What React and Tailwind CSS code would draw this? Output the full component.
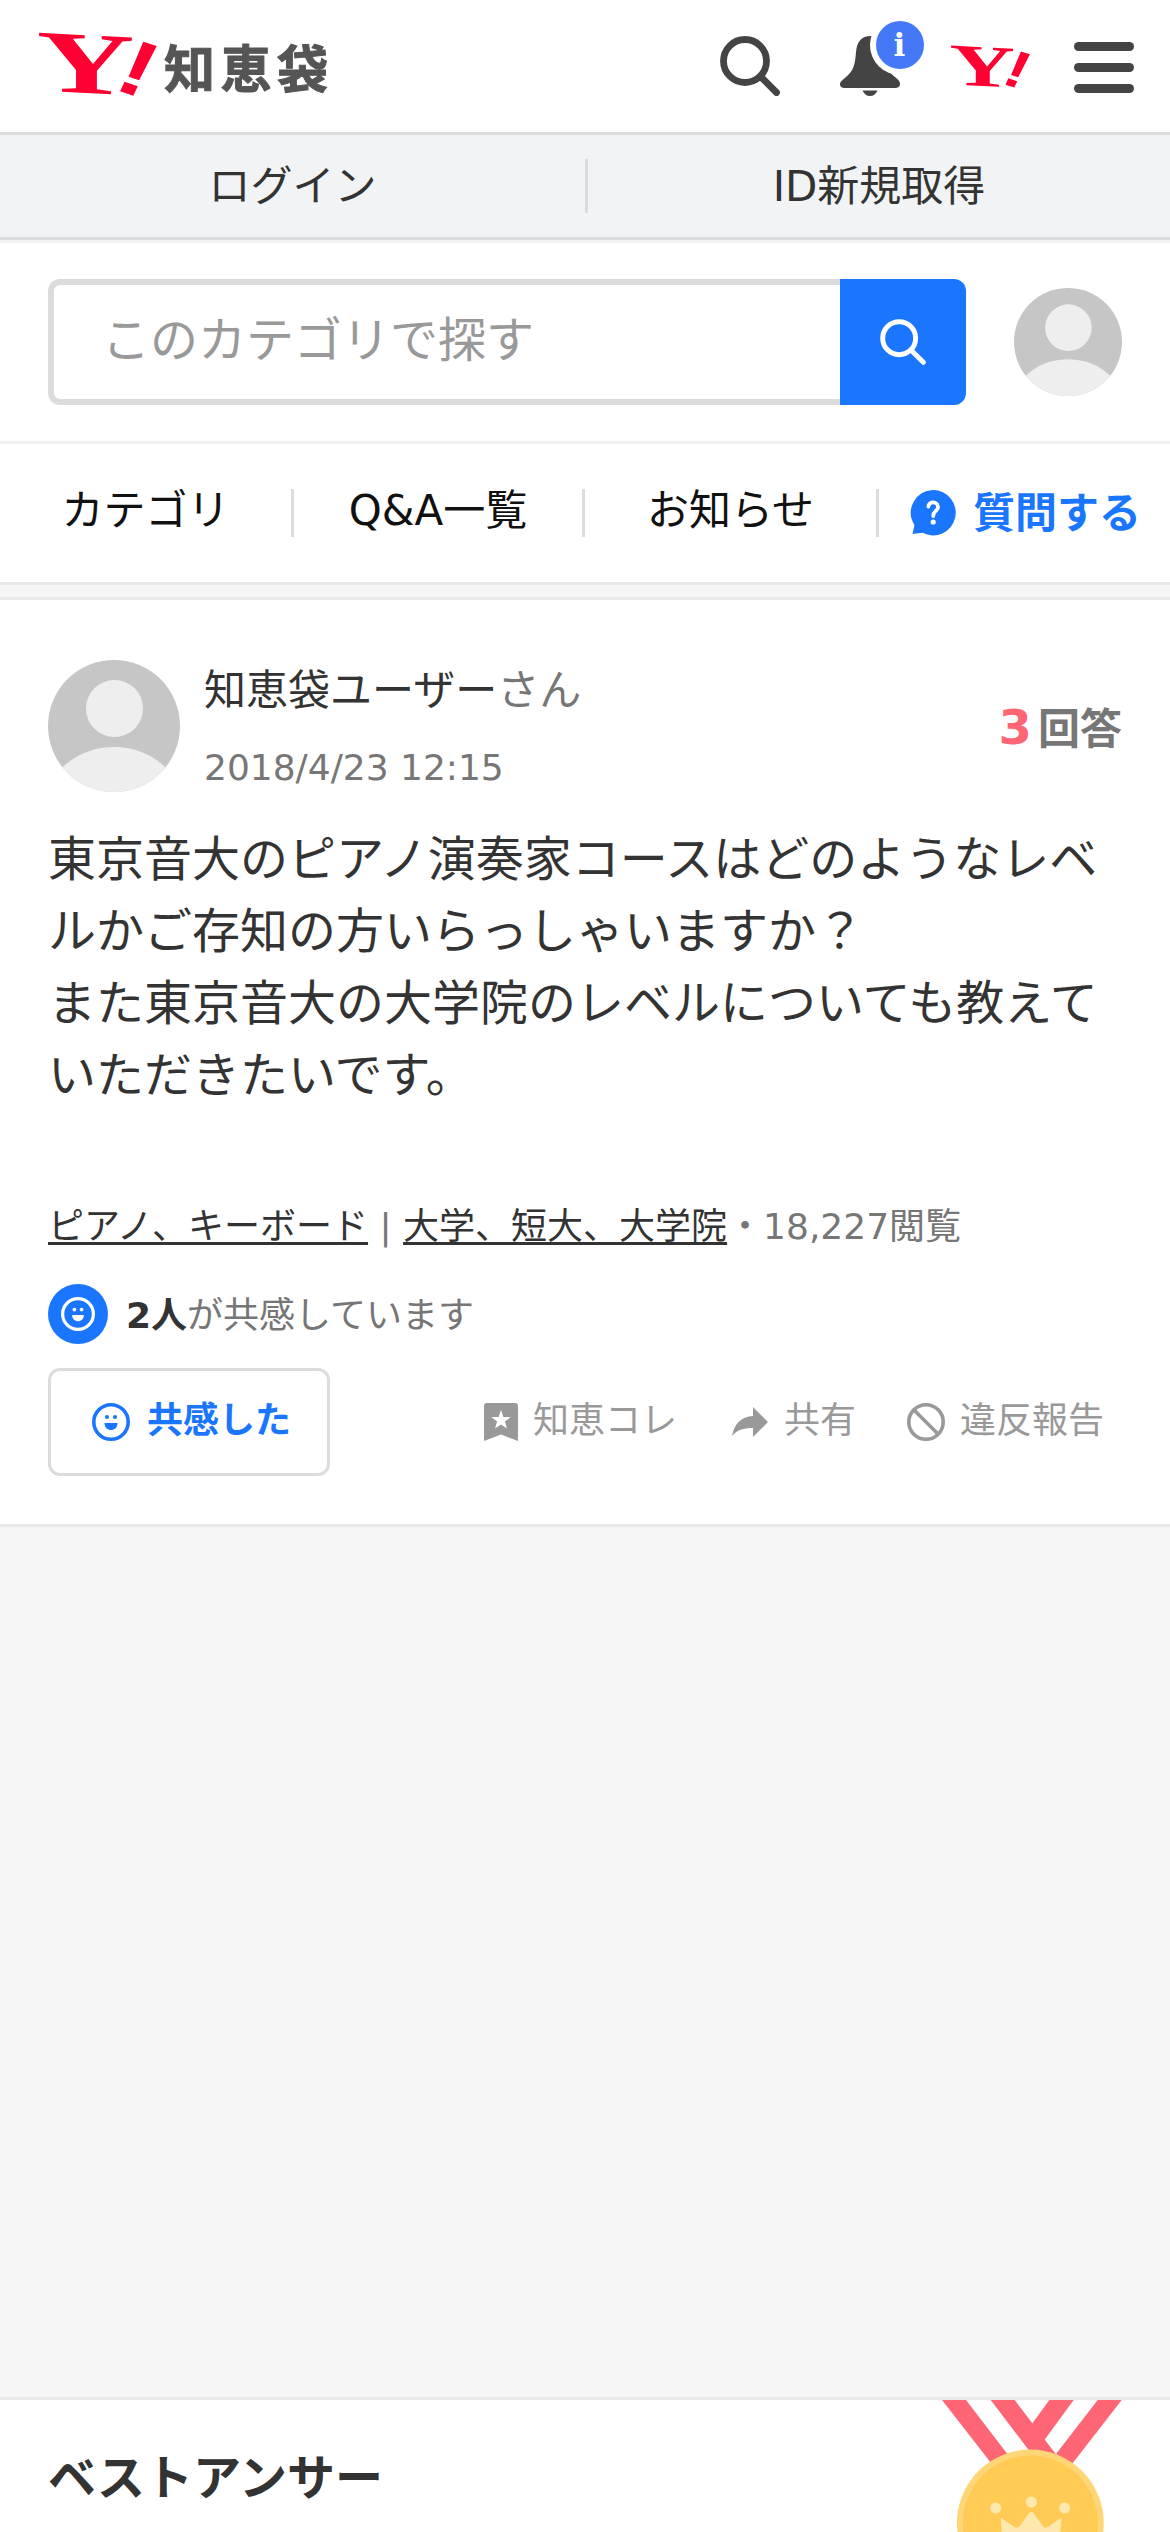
import React from "react";

function YMark({ className }) {
  return (
    <svg className={className} viewBox="0 0 118 64" aria-label="Y!">
      <g fill="#ff0033" fontWeight="700">
        <text
          transform="translate(46.500 61) skewY(3) scale(1.47 0.96)"
          fontSize="92"
          textAnchor="middle"
          fontFamily="'Liberation Serif', serif"
        >
          Y
        </text>
        <text
          transform="translate(88 61.500) rotate(18) skewX(-7) scale(1.25 1)"
          fontSize="79"
          textAnchor="middle"
          fontFamily="'Liberation Sans', sans-serif"
        >
          !
        </text>
      </g>
    </svg>
  );
}

function SearchIcon({ className, strokeWidth }) {
  return (
    <svg className={className} viewBox="0 0 60 60" fill="none" stroke="currentColor" strokeWidth={strokeWidth} strokeLinecap="round">
      <circle cx="25" cy="25" r="21.5" />
      <path d="M41 41 L56.5 56.5" />
    </svg>
  );
}

function Bell() {
  return (
    <svg className="h-[80px] w-[88px]" viewBox="0 0 88 80">
      <path
        d="M33 18 C23 18 19 24 18 34 C17 48 15 53 8 59 C4 62.5 2 64 2 66 C2 69 4 70 7 70 H57 C60 70 62 68.500 62 66 C62 63 60 61.500 57 59 C49 53 48 46 46 32 C45 23 42 18 33 18Z"
        fill="#444"
      />
      <path d="M24.500 72.500 H39.500 C38 76 35.500 78 32 78 C28.500 78 26 76 24.500 72.500Z" fill="#444" />
      <circle cx="62" cy="27" r="30" fill="#fff" />
      <circle cx="62" cy="27" r="24" fill="#4478f6" />
      <text x="61.500" y="37.500" fill="#fff" fontSize="31" fontWeight="700" textAnchor="middle" fontFamily="'DejaVu Serif', serif">
        i
      </text>
    </svg>
  );
}

function Avatar({ className }) {
  return (
    <svg className={className} viewBox="0 0 132 132">
      <defs>
        <clipPath id="avatar-clip"><circle cx="66" cy="66" r="66" /></clipPath>
      </defs>
      <g clipPath="url(#avatar-clip)">
        <rect width="132" height="132" fill="#c6c6c6" />
        <circle cx="66.500" cy="48.500" r="28.500" fill="#eee" />
        <ellipse cx="66" cy="146" rx="68" ry="59" fill="#eee" />
      </g>
    </svg>
  );
}

function Smile({ className }) {
  return (
    <svg className={className} viewBox="0 0 38 38">
      <circle cx="19" cy="19" r="17.200" fill="none" stroke="currentColor" strokeWidth="3.600" />
      <circle cx="15" cy="14" r="2.100" fill="currentColor" />
      <circle cx="23" cy="14" r="2.100" fill="currentColor" />
      <path d="M12.500 20 H25.500 C25.500 24.500 22.500 27 19 27 C15.500 27 12.500 24.500 12.500 20Z" fill="currentColor" />
    </svg>
  );
}

function AskIcon() {
  return (
    <svg className="h-[46px] w-[46px]" viewBox="0 0 46 46">
      <path d="M23 0 A22.700 22.700 0 1 1 12.500 42.800 L2.500 44 L4.500 35 A22.700 22.700 0 0 1 23 0Z" fill="#1a75ff" />
      <path d="M18.400 16.500 C18.400 11 28 11 28 17 C28 21 23.200 21 23.200 26" fill="none" stroke="#fff" strokeWidth="3.800" strokeLinecap="round" />
      <circle cx="23.200" cy="32" r="2.600" fill="#fff" />
    </svg>
  );
}

function Bookmark() {
  return (
    <svg className="h-[38px] w-[34px]" viewBox="0 0 34 38">
      <path d="M3 0 H31 Q34 0 34 3 V38 L17 31.500 L0 38 V3 Q0 0 3 0Z" fill="#999" />
      <path d="M17 7 L19.400 14 L26.800 14.100 L20.900 18.600 L23 25.600 L17 21.400 L11 25.600 L13.100 18.600 L7.200 14.100 L14.600 14Z" fill="#fff" />
    </svg>
  );
}

function Share() {
  return (
    <svg className="h-[30px] w-[36px]" viewBox="0 0 36 30">
      <path d="M21 0 L36 15 L21 30 V21 C11 21 5 23 0 29 C2 17 9 9.500 21 9Z" fill="#999" />
    </svg>
  );
}

function Ban() {
  return (
    <svg className="h-[38px] w-[38px]" viewBox="0 0 38 38" fill="none" stroke="#999" strokeWidth="3.600">
      <circle cx="19" cy="19" r="17.200" />
      <path d="M7 7 L31 31" />
    </svg>
  );
}

function Medal() {
  return (
    <svg className="h-[132px] w-[190px]" viewBox="40 20 190 132">
      <g fill="#ff6675">
        <path d="M149.300 20 H173.700 L140 66 L125 53.500Z" />
        <path d="M197.700 20 H221.700 L172 84 L156 74Z" />
        <path d="M42 20 H66 L112 80 L91 83Z" />
        <path d="M90.700 20 H114.700 L161 81 L137 81Z" />
      </g>
      <circle cx="130.300" cy="143" r="73.400" fill="#ffd676" />
      <circle cx="130.300" cy="143" r="67.500" fill="#ffcb54" />
      <g fill="#ffe8ae">
        <circle cx="95.700" cy="128" r="5.500" />
        <circle cx="131.300" cy="122" r="5.500" />
        <circle cx="164.700" cy="128" r="5.500" />
        <path d="M100.700 137.500 L114 146.800 Q117.500 149 120 145.800 L129 133 Q131.300 130.500 133.500 133 L142.500 145.800 Q144.500 149 148 146.800 L161.700 137.500 L159 170 H103Z" />
      </g>
    </svg>
  );
}

function Divider() {
  return <span className="h-[48px] w-[3px] bg-[#dcdcdc]" />;
}

export default function App() {
  return (
    <div
      lang="ja"
      className="flex h-[2532px] w-[1170px] flex-col overflow-hidden bg-[#f6f6f6] font-['DejaVu_Sans','Noto_Sans_CJK_JP',sans-serif] text-[#333]"
    >
      <header className="flex h-[135px] shrink-0 items-start border-b-[3px] border-[#dadcdd] bg-white pr-9 pl-[39px]">
        <YMark className="mt-8 h-16 w-[118px] overflow-visible" />
        <h1 className="mt-[46px] ml-[7px] text-[51px] leading-[50px] font-bold tracking-[5.500px] text-[#555] [-webkit-text-stroke:1px_#555]">
          知恵袋
        </h1>
        <div className="ml-auto flex items-start">
          <SearchIcon className="mt-9 h-[60px] w-[60px] text-[#444]" strokeWidth={6.8} />
          <div className="mt-[18px] ml-[58px]"><Bell /></div>
          <YMark className="mt-[45px] ml-[25px] h-[43px] w-[79px] overflow-visible" />
          <div className="mt-[42px] ml-11 flex flex-col gap-3">
            <span className="h-[9px] w-[60px] rounded-full bg-[#444]" />
            <span className="h-[9px] w-[60px] rounded-full bg-[#444]" />
            <span className="h-[9px] w-[60px] rounded-full bg-[#444]" />
          </div>
        </div>
      </header>

      <div className="flex h-[105px] shrink-0 items-center border-b-[3px] border-[#dadcdd] bg-[#f1f3f4] text-[42px] leading-[60px]">
        <a className="w-[585px] pt-0.5 text-center">ログイン</a>
        <span className="h-[54px] w-[3px] bg-[#dadcdd]" />
        <a className="flex-1 pt-0.5 text-center">ID新規取得</a>
      </div>

      <div className="flex h-[204px] shrink-0 items-start border-t-[3px] border-b-[3px] border-t-[#f3f3f3] border-b-[#f1f1f1] bg-white px-12 pt-9">
        <div className="flex h-[126px] w-[918px]">
          <div className="flex w-[792px] items-center rounded-l-[12px] border-y-[6px] border-l-[6px] border-[#dcdcdc] pb-1 pl-12 text-[48px] leading-[72px] text-[#999]">
            このカテゴリで探す
          </div>
          <button className="flex w-[126px] items-center justify-center rounded-r-[12px] bg-[#1a75ff]">
            <SearchIcon className="h-[46px] w-[46px] text-white" strokeWidth={6.5} />
          </button>
        </div>
        <Avatar className="mt-[9px] ml-12 h-[108px] w-[108px]" />
      </div>

      <nav className="flex h-[141px] shrink-0 items-center border-b-[3px] border-[#e9e9e9] bg-white text-[42px] leading-[60px] text-[#111]">
        <a className="w-[291px] pb-1 text-center">カテゴリ</a>
        <Divider />
        <a className="w-[288px] pb-1 text-center">Q&amp;A一覧</a>
        <Divider />
        <a className="w-[291px] pb-1 text-center">お知らせ</a>
        <Divider />
        <a className="flex items-center gap-[17px] pl-[31px] font-bold text-[#1a75ff]">
          <AskIcon />
          <span className="pt-0.5">質問する</span>
        </a>
      </nav>

      <main className="mt-3 h-[930px] shrink-0 border-y-[3px] border-[#e9e9e9] bg-white px-12 pt-[60px]">
        <div className="flex h-[132px]">
          <Avatar className="h-[132px] w-[132px]" />
          <div className="ml-6">
            <p className="mt-px text-[42px] leading-[60px] whitespace-nowrap">
              知恵袋ユーザー<span className="text-[#767676]">さん</span>
            </p>
            <p className="mt-[19px] text-[36px] leading-[56px] text-[#767676]">2018/4/23 12:15</p>
          </div>
          <p className="mt-[31px] ml-auto flex items-baseline gap-[6px] text-[42px] leading-[72px] font-bold text-[#767676]">
            <span className="text-[48px] text-[#ff6675]">3</span>
            <span>回答</span>
          </p>
        </div>
        <p className="mt-[31px] text-[48px] leading-[72px]">
          東京音大のピアノ演奏家コースはどのようなレベ
          <br />
          ルかご存知の方いらっしゃいますか？
          <br />
          また東京音大の大学院のレベルについても教えて
          <br />
          いただきたいです。
        </p>
        <p className="mt-[89px] text-[36px] leading-[54px] whitespace-nowrap text-[#767676]">
          <a className="text-[#333] underline decoration-[3px] underline-offset-[3px]">ピアノ、キーボード</a> |{" "}
          <a className="text-[#333] underline decoration-[3px] underline-offset-[3px]">大学、短大、大学院</a>・18,227閲覧
        </p>
        <div className="mt-[30px] flex h-[60px] items-center gap-[18px]">
          <span className="flex h-[60px] w-[60px] items-center justify-center rounded-full bg-[#1a75ff]">
            <Smile className="h-[34px] w-[34px] text-white" />
          </span>
          <p className="pt-[3px] text-[36px] leading-[54px] text-[#767676]">
            <b className="text-[#333]">2人</b>が共感しています
          </p>
        </div>
        <div className="mt-6 flex h-[108px] items-center text-[36px] leading-[54px] text-[#999]">
          <button className="flex h-[108px] w-[282px] items-center gap-[17px] rounded-[12px] border-[3px] border-[#dcdcdc] pl-[41px] font-bold text-[#1a75ff]">
            <Smile className="h-[38px] w-[38px]" />
            <span className="pb-0.5">共感した</span>
          </button>
          <div className="ml-[154px] flex items-center">
            <Bookmark />
            <span className="ml-[15px] pb-0.5">知恵コレ</span>
          </div>
          <div className="ml-[55px] flex items-center">
            <Share />
            <span className="ml-[16px] pb-0.5">共有</span>
          </div>
          <div className="ml-[51px] flex items-center">
            <Ban />
            <span className="ml-[15px] pb-0.5">違反報告</span>
          </div>
        </div>
      </main>

      <section className="mt-[870px] flex h-[135px] shrink-0 items-start justify-between border-t-[3px] border-[#e9e9e9] bg-white pr-10 pl-12">
        <h2 className="mt-[42px] text-[48px] leading-[72px] font-bold">ベストアンサー</h2>
        <Medal />
      </section>
    </div>
  );
}
